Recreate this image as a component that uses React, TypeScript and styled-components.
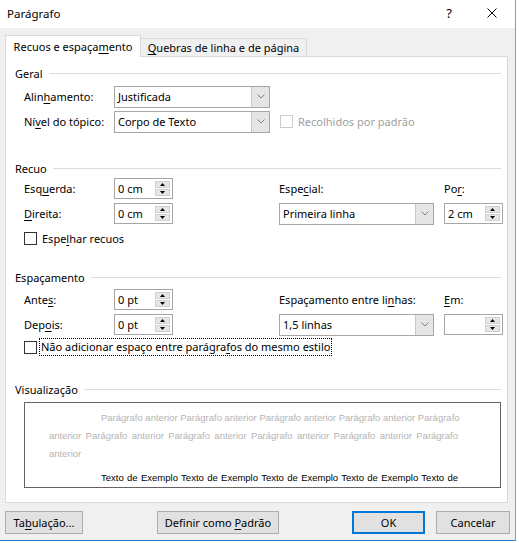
import styled, { createGlobalStyle, css } from 'styled-components';

const GlobalStyle = createGlobalStyle`
  html, body {
    margin: 0;
    padding: 0;
    background: #ffffff;
  }

  body {
    font-family: 'Noto Sans', 'Segoe UI', sans-serif;
    font-size: 11px;
    color: #000000;
  }

  u {
    text-decoration-thickness: 1px;
    text-underline-offset: 2px;
  }
`;

const Chevron = () => (
  <svg width="8" height="5" viewBox="0 0 8 5">
    <polyline points="0.5,0.5 4,4 7.5,0.5" fill="none" stroke="#808080" strokeWidth="1" />
  </svg>
);

const Arrow = ({ down }: { down?: boolean }) => (
  <svg width="5" height="3" viewBox="0 0 5 3">
    <polygon points={down ? '0,0 5,0 2.5,3' : '0,3 5,3 2.5,0'} fill="#000" />
  </svg>
);

const Dropdown = ({ value, width }: { value: string; width?: number }) => (
  <SelectBox $width={width}>
    <SelectValue>{value}</SelectValue>
    <DropButton>
      <Chevron />
    </DropButton>
  </SelectBox>
);

const Spin = ({ value }: { value: string }) => (
  <SpinBox>
    <SpinValue>{value}</SpinValue>
    <SpinButtons>
      <SpinButton>
        <Arrow />
      </SpinButton>
      <SpinButton>
        <Arrow down />
      </SpinButton>
    </SpinButtons>
  </SpinBox>
);

const App = () => {
  return (
    <>
      <GlobalStyle />
      <Window>
        <TitleBar>
          <Title>Parágrafo</Title>
          <HelpButton>?</HelpButton>
          <CloseButton>
            <svg width="10" height="10" viewBox="0 0 10 10">
              <path d="M0.5 0.5 L9.5 9.5 M9.5 0.5 L0.5 9.5" stroke="#000" strokeWidth="1" />
            </svg>
          </CloseButton>
        </TitleBar>

        <TabStrip>
          <Tab $active>
            <span>
              Recuos e espaça<u>m</u>ento
            </span>
          </Tab>
          <Tab>
            <span>
              <u>Q</u>uebras de linha e de página
            </span>
          </Tab>
        </TabStrip>

        <Panel>
          <GroupTitle $top={8}>Geral</GroupTitle>
          <FieldGrid $top={3} $columns="90px 156px 10px auto">
            <Label>
              Alin<u>h</u>amento:
            </Label>
            <Dropdown value="Justificada" />
            <span />
            <span />
            <Label>
              Ní<u>v</u>el do tópico:
            </Label>
            <Dropdown value="Corpo de Texto" />
            <span />
            <CheckRow $disabled>
              <CheckBox $disabled />
              <span>Recolhidos por padrão</span>
            </CheckRow>
          </FieldGrid>

          <GroupTitle $top={26}>Recuo</GroupTitle>
          <FieldGrid $columns="90px 59px 106px 155px 10px 58px">
            <Label>
              Esq<u>u</u>erda:
            </Label>
            <Spin value="0 cm" />
            <span />
            <Label>
              Espe<u>c</u>ial:
            </Label>
            <span />
            <Label>
              Po<u>r</u>:
            </Label>
            <Label>
              <u>D</u>ireita:
            </Label>
            <Spin value="0 cm" />
            <span />
            <Dropdown value="Primeira linha" />
            <span />
            <Spin value="2 cm" />
          </FieldGrid>
          <CheckLine>
            <CheckRow>
              <CheckBox />
              <span>
                Espe<u>l</u>har recuos
              </span>
            </CheckRow>
          </CheckLine>

          <GroupTitle $top={18}>Espaçamento</GroupTitle>
          <FieldGrid $top={2} $columns="90px 59px 106px 155px 10px 58px">
            <Label>
              Ante<u>s</u>:
            </Label>
            <Spin value="0 pt" />
            <span />
            <Label>
              Espaçamento entre li<u>n</u>has:
            </Label>
            <span />
            <Label>
              <u>E</u>m:
            </Label>
            <Label>
              Dep<u>o</u>is:
            </Label>
            <Spin value="0 pt" />
            <span />
            <Dropdown value="1,5 linhas" />
            <span />
            <Spin value="" />
          </FieldGrid>
          <CheckLine $height={20}>
            <CheckRow>
              <CheckBox />
              <FocusText>
                Não adicionar espaço entre parágra<u>f</u>os do mesmo estilo
              </FocusText>
            </CheckRow>
          </CheckLine>

          <GroupTitle $top={24}>Visualização</GroupTitle>
          <Preview>
            <PreviewLine $faded $indent>
              Parágrafo anterior Parágrafo anterior Parágrafo anterior Parágrafo anterior Parágrafo
            </PreviewLine>
            <PreviewLine $faded>
              anterior Parágrafo anterior Parágrafo anterior Parágrafo anterior Parágrafo anterior
              Parágrafo
            </PreviewLine>
            <PreviewLine $faded $last>
              anterior
            </PreviewLine>
            <SampleGap />
            <PreviewLine $indent>
              Texto de Exemplo Texto de Exemplo Texto de Exemplo Texto de Exemplo Texto de
            </PreviewLine>
          </Preview>
        </Panel>

        <Footer>
          <Button $width={78}>
            <span>
              Ta<u>b</u>ulação...
            </span>
          </Button>
          <Button $width={122} $left={74}>
            <span>
              Definir como <u>P</u>adrão
            </span>
          </Button>
          <Spacer />
          <Button $width={73} $primary>
            <span>OK</span>
          </Button>
          <Button $width={74} $left={11}>
            <span>Cancelar</span>
          </Button>
        </Footer>
      </Window>
    </>
  );
};

const Window = styled.div`
  width: 515px;
  height: 540px;
  background: #f0f0f0;
  border-right: 1px solid #9a9a9a;
  border-bottom: 1px solid #2f7bc4;
  overflow: hidden;
`;

const TitleBar = styled.div`
  display: flex;
  align-items: center;
  height: 28px;
  background: #ffffff;
`;

const Title = styled.div`
  flex: 1;
  padding: 0 0 2px 7px;
  font-size: 11.5px;
`;

const HelpButton = styled.div`
  width: 40px;
  text-align: center;
  font-size: 13px;
  padding-bottom: 2px;
`;

const CloseButton = styled.div`
  display: flex;
  justify-content: center;
  align-items: center;
  width: 46px;
  height: 28px;
  padding-bottom: 2px;
  box-sizing: border-box;
`;

const TabStrip = styled.div`
  position: relative;
  z-index: 1;
  display: flex;
  align-items: flex-end;
  height: 22px;
  margin: 7px 0 -1px 5px;
`;

const Tab = styled.div<{ $active?: boolean }>`
  display: flex;
  justify-content: center;
  align-items: center;
  box-sizing: border-box;
  border: 1px solid #d9d9d9;
  border-bottom: none;
  white-space: nowrap;
  ${({ $active }) =>
    $active
      ? css`
          width: 136px;
          height: 22px;
          background: #ffffff;
          padding-bottom: 1px;
        `
      : css`
          width: 166px;
          height: 18px;
          margin-bottom: 1px;
          border-left: none;
          background: #f0f0f0;
        `}
`;

const Panel = styled.div`
  box-sizing: border-box;
  width: 503px;
  height: 447px;
  margin-left: 5px;
  padding: 0 6px 0 9px;
  background: #ffffff;
  border: 1px solid #d9d9d9;
`;

const GroupTitle = styled.div<{ $top: number }>`
  display: flex;
  align-items: center;
  gap: 6px;
  height: 16px;
  margin-top: ${({ $top }) => $top}px;

  &::after {
    content: '';
    flex: 1;
    height: 1px;
    background: #dcdcdc;
  }
`;

const FieldGrid = styled.div<{ $columns: string; $top?: number }>`
  display: grid;
  grid-template-columns: ${({ $columns }) => $columns};
  grid-auto-rows: 25px;
  align-items: center;
  margin: ${({ $top }) => $top ?? 0}px 0 0 9px;
`;

const Label = styled.div`
  white-space: nowrap;
`;

const SelectBox = styled.div<{ $width?: number }>`
  display: flex;
  box-sizing: border-box;
  width: ${({ $width }) => ($width ? `${$width}px` : '100%')};
  height: 22px;
  border: 1px solid #a6a6a6;
  background: #ffffff;
`;

const SelectValue = styled.div`
  flex: 1;
  display: flex;
  align-items: center;
  padding-left: 3px;
  padding-bottom: 1px;
`;

const DropButton = styled.div`
  display: flex;
  justify-content: center;
  align-items: center;
  width: 17px;
  background: #e5e5e5;
  border-left: 1px solid #c8c8c8;
`;

const SpinBox = styled.div`
  display: flex;
  align-items: center;
  box-sizing: border-box;
  width: 59px;
  height: 21px;
  padding-right: 2px;
  border: 1px solid #a6a6a6;
  background: #ffffff;
`;

const SpinValue = styled.div`
  flex: 1;
  padding: 0 0 1px 3px;
`;

const SpinButtons = styled.div`
  display: flex;
  flex-direction: column;
  gap: 1px;
`;

const SpinButton = styled.div`
  display: flex;
  justify-content: center;
  align-items: center;
  box-sizing: border-box;
  width: 15px;
  height: 7px;
  background: #e6e6e6;
  border: 1px solid #cfcfcf;
`;

const CheckLine = styled.div<{ $height?: number }>`
  display: flex;
  align-items: center;
  height: ${({ $height }) => $height ?? 25}px;
  margin-left: 9px;
`;

const CheckRow = styled.div<{ $disabled?: boolean }>`
  display: flex;
  align-items: center;
  gap: 4px;
  white-space: nowrap;
  color: ${({ $disabled }) => ($disabled ? '#a0a0a0' : '#000000')};
`;

const CheckBox = styled.span<{ $disabled?: boolean }>`
  box-sizing: border-box;
  width: 13px;
  height: 13px;
  margin-right: 1px;
  background: #ffffff;
  border: 1px solid ${({ $disabled }) => ($disabled ? '#cccccc' : '#333333')};
`;

const FocusText = styled.span`
  padding: 0 1px 1px 1px;
  margin-left: -2px;
  outline: 1px dotted #000000;
  outline-offset: 0;
`;

const Preview = styled.div`
  box-sizing: border-box;
  height: 86px;
  margin: 5px 0 0 9px;
  padding: 6px 42px 0 24px;
  border: 1px solid #646464;
  overflow: hidden;
  font-family: 'Liberation Sans', Arial, sans-serif;
  font-size: 9.5px;
`;

const PreviewLine = styled.div<{ $faded?: boolean; $indent?: boolean; $last?: boolean }>`
  height: 18px;
  line-height: 18px;
  white-space: nowrap;
  text-align: justify;
  text-align-last: ${({ $last }) => ($last ? 'left' : 'justify')};
  padding-left: ${({ $indent }) => ($indent ? 52 : 0)}px;
  color: ${({ $faded }) => ($faded ? '#b4b4b4' : '#000000')};
`;

const SampleGap = styled.div`
  height: 6px;
`;

const Footer = styled.div`
  display: flex;
  margin: 8px 5px 0 5px;
`;

const Spacer = styled.div`
  flex: 1;
`;

const Button = styled.div<{ $width: number; $left?: number; $primary?: boolean }>`
  display: flex;
  justify-content: center;
  align-items: center;
  box-sizing: border-box;
  width: ${({ $width }) => $width}px;
  height: 23px;
  margin-left: ${({ $left }) => $left ?? 0}px;
  padding-bottom: 1px;
  white-space: nowrap;
  background: #e1e1e1;
  border: ${({ $primary }) => ($primary ? '2px solid #0078d7' : '1px solid #adadad')};
`;

export default App;
